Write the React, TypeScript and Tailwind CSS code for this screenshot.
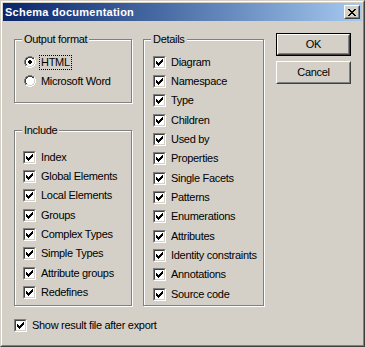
const CHECK = ["......X", ".....XX", "X...XXX", "XX.XXX.", "XXXXX..", ".XXX...", "..X...."];

const RADIO = [
  "....GGGG....",
  "..GGDDDDGG..",
  ".GDDWWWWDDW.",
  ".GDWWWWWWLW.",
  "GDWWWWWWWWLW",
  "GDWWWWWWWWLW",
  "GDWWWWWWWWLW",
  "GDWWWWWWWWLW",
  ".GDWWWWWWLW.",
  ".GLLWWWWLLW.",
  "..WWLLLLWW..",
  "....WWWW....",
];

const DOT = ["....", ".XX.", "XXXX", "XXXX", ".XX."];

const CLOSE_X = ["XX....XX", ".XX..XX.", "..XXXX..", "...XX...", "..XXXX..", ".XX..XX.", "XX....XX"];

const PALETTE: Record<string, string> = {
  X: "#000000",
  G: "#808080",
  D: "#404040",
  W: "#ffffff",
  L: "#d4d0c8",
};

function PixelArt({ map, dot }: { map: string[]; dot?: boolean }) {
  const w = map[0].length;
  const h = map.length;
  return (
    <svg width={w} height={h} viewBox={`0 0 ${w} ${h}`} shapeRendering="crispEdges" className="block shrink-0">
      {map.flatMap((row, y) =>
        row.split("").map((c, x) =>
          PALETTE[c] ? <rect key={`${x}-${y}`} x={x} y={y} width={1} height={1} fill={PALETTE[c]} /> : null
        )
      )}
      {dot &&
        DOT.flatMap((row, y) =>
          row.split("").map((c, x) =>
            c === "X" ? <rect key={`d${x}-${y}`} x={x + 4} y={y + 3} width={1} height={1} fill="#000" /> : null
          )
        )}
    </svg>
  );
}

function CheckBox() {
  return (
    <div className="w-[13px] h-[13px] shrink-0 border border-t-[#808080] border-l-[#808080] border-r-white border-b-white">
      <div className="w-full h-full border border-t-[#404040] border-l-[#404040] border-r-[#d4d0c8] border-b-[#d4d0c8] bg-white pl-px pt-px">
        <PixelArt map={CHECK} />
      </div>
    </div>
  );
}

function CheckRow({ label, tall }: { label: string; tall?: boolean }) {
  return (
    <div className={`flex items-start gap-[5px] ${tall ? "h-[20px]" : "h-[19px]"}`}>
      <CheckBox />
      <span className="leading-[13px]">{label}</span>
    </div>
  );
}

function GroupBox({ title, className, children }: { title: string; className: string; children: React.ReactNode }) {
  return (
    <div
      className={`relative border border-[#808080] shadow-[inset_1px_1px_0_#fff,1px_1px_0_#fff] ${className}`}
    >
      <span className="absolute -top-[7px] left-[7px] px-[2px] bg-[#d4d0c8] leading-[13px]">{title}</span>
      {children}
    </div>
  );
}

function Button({ label, isDefault }: { label: string; isDefault?: boolean }) {
  const face = (
    <div className="h-full border border-t-white border-l-white border-r-[#404040] border-b-[#404040]">
      <div className="h-full flex items-center justify-center border border-t-[#d4d0c8] border-l-[#d4d0c8] border-r-[#808080] border-b-[#808080]">
        {label}
      </div>
    </div>
  );
  return isDefault ? (
    <div className="w-[75px] h-[23px] border border-black">{face}</div>
  ) : (
    <div className="w-[75px] h-[23px]">{face}</div>
  );
}

const INCLUDE = [
  "Index",
  "Global Elements",
  "Local Elements",
  "Groups",
  "Complex Types",
  "Simple Types",
  "Attribute groups",
  "Redefines",
];

const DETAILS = [
  "Diagram",
  "Namespace",
  "Type",
  "Children",
  "Used by",
  "Properties",
  "Single Facets",
  "Patterns",
  "Enumerations",
  "Attributes",
  "Identity constraints",
  "Annotations",
  "Source code",
];

export default function App() {
  return (
    <div className="w-[365px] h-[347px] bg-[#d4d0c8] border border-t-[#d4d0c8] border-l-[#d4d0c8] border-r-[#404040] border-b-[#404040] font-['Liberation_Sans',Arial,sans-serif] text-[11px] tracking-[-0.3px] text-black select-none">
      <div className="h-full border border-t-white border-l-white border-r-[#808080] border-b-[#808080] p-px flex flex-col">
        {/* title bar */}
        <div className="h-[18px] shrink-0 flex items-center justify-between pl-[2px] pr-[2px] bg-gradient-to-r from-[#0a246a] to-[#a6caf0]">
          <span className="text-white font-bold tracking-[0.25px] leading-[13px]">Schema documentation</span>
          <div className="w-[16px] h-[14px] border border-t-white border-l-white border-r-[#404040] border-b-[#404040] bg-[#d4d0c8]">
            <div className="h-full border border-t-[#d4d0c8] border-l-[#d4d0c8] border-r-[#808080] border-b-[#808080] pl-[2px] pt-[2px]">
              <PixelArt map={CLOSE_X} />
            </div>
          </div>
        </div>

        {/* body */}
        <div className="flex-1 flex flex-col pl-[11px] pt-[12px]">
          <div className="flex items-start">
            <div className="w-[118px] mt-[6px] flex flex-col">
              <GroupBox title="Output format" className="h-[64px] pl-[9px] pt-[16px]">
                <div className="flex items-start h-[19px]">
                  <PixelArt map={RADIO} dot />
                  <span className="ml-[3px] -mt-px border border-dotted border-black px-px leading-[13px]">HTML</span>
                </div>
                <div className="flex items-start h-[19px] gap-[5px]">
                  <PixelArt map={RADIO} />
                  <span className="leading-[13px]">Microsoft Word</span>
                </div>
              </GroupBox>
              <GroupBox title="Include" className="mt-[27px] h-[176px] pl-[8px] pt-[20px]">
                {INCLUDE.map((label, i) => (
                  <CheckRow key={label} label={label} tall={i % 3 === 2} />
                ))}
              </GroupBox>
            </div>

            <GroupBox title="Details" className="ml-[11px] mt-[6px] w-[121px] h-[267px] pl-[9px] pt-[16px]">
              {DETAILS.map((label, i) => (
                <CheckRow key={label} label={label} tall={i % 3 === 2} />
              ))}
            </GroupBox>

            <div className="ml-[12px] flex flex-col gap-[5px]">
              <Button label="OK" isDefault />
              <Button label="Cancel" />
            </div>
          </div>

          <div className="mt-[13px] flex items-start gap-[5px]">
            <CheckBox />
            <span className="leading-[13px]">Show result file after export</span>
          </div>
        </div>
      </div>
    </div>
  );
}
